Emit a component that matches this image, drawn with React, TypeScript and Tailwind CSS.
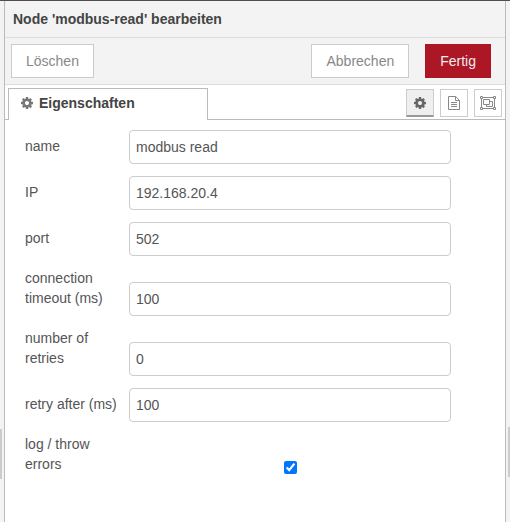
import React from "react";

const GEAR =
  "M1024 640q0 106-75 181t-181 75-181-75-75-181 75-181 181-75 181 75 75 181zm512-109v222q0 12-8 23t-20 13l-185 28q-19 54-39 91 35 50 107 138 10 12 10 25t-9 23q-27 37-99 108t-94 71q-12 0-26-9l-138-108q-44 23-91 38-16 136-29 186-7 28-36 28h-222q-14 0-24.5-8.5t-11.5-21.5l-28-184q-49-16-90-37l-141 107q-10 9-25 9-14 0-25-11-126-114-165-168-7-10-7-23 0-12 8-23 15-21 51-66.5t54-70.5q-27-50-41-99l-183-27q-13-2-21-12.5t-8-23.5v-222q0-12 8-23t19-13l186-28q14-46 39-92-40-57-107-138-10-12-10-24 0-10 9-23 26-36 98.5-107.5t94.5-71.5q13 0 26 10l138 107q44-23 91-38 16-136 29-186 7-28 36-28h222q14 0 24.5 8.5t11.5 21.5l28 184q49 16 90 37l142-107q9-9 24-9 13 0 25 10 129 119 165 170 7 8 7 22 0 12-8 23-15 21-51 66.5t-54 70.5q26 50 41 98l183 28q13 2 21 12.5t8 23.5z";

function GearIcon() {
  return (
    <svg className="size-3 shrink-0" viewBox="0 -128 1536 1536" fill="currentColor" fillRule="evenodd" aria-hidden="true">
      <path d={GEAR} />
    </svg>
  );
}

function FileIcon() {
  return (
    <svg className="h-3.5 w-3" viewBox="0 0 12 14" fill="none" stroke="currentColor" aria-hidden="true">
      <path d="M.5.5h7.2l3.8 3.8v9.2H.5zM7.5.5v4h4M3 6.5h6M3 8.5h6M3 10.5h6" />
    </svg>
  );
}

function GroupIcon() {
  return (
    <svg className="h-3.5 w-4" viewBox="0 0 16 14" fill="none" stroke="currentColor" aria-hidden="true">
      <path d="M2 1.5h12M2 12.5h12M1.5 2v10M14.5 2v10M3.5 3.5h6v5h-6zM9.5 5.5h3v5h-6v-2" />
      <path fill="white" d="M.5.5h2v2h-2zM13.5.5h2v2h-2zM.5 11.5h2v2h-2zM13.5 11.5h2v2h-2z" />
    </svg>
  );
}

const fields = [
  { id: "name", label: "name", value: "modbus read" },
  { id: "ip", label: "IP", value: "192.168.20.4" },
  { id: "port", label: "port", value: "502" },
  { id: "timeout", label: "connection timeout (ms)", value: "100" },
  { id: "retries", label: "number of retries", value: "0" },
  { id: "retry-after", label: "retry after (ms)", value: "100" },
];

const plainButton = "h-[34px] border border-[#ccc] bg-white px-3.5 text-[#888]";
const iconButton = "flex size-7 items-center justify-center border border-[#ccc]";

export default function App() {
  return (
    <div className="flex min-h-screen flex-col border-t border-[#504c50] bg-[#f3f3f3] font-['Liberation_Sans',Arial,sans-serif] text-sm leading-5 text-[#555]">
      <div className="flex grow">
        <div className="flex w-1 shrink-0 flex-col justify-end pb-[43px]">
          <div className="h-[50px] w-0.5 bg-[#ccc]" />
        </div>
        <main className="flex min-w-0 grow flex-col border-x border-[#bbb] bg-white">
          <h1 className="flex h-[37px] items-center border-b border-[#ddd] bg-[#f3f3f3] px-2 font-bold text-[#444]">
            Node 'modbus-read' bearbeiten
          </h1>
          <div className="flex h-[47px] items-center border-b border-[#ddd] bg-[#f3f3f3] pr-3.5 pl-1.5">
            <button type="button" className={plainButton}>Löschen</button>
            <button type="button" className={`${plainButton} mr-4 ml-auto`}>Abbrechen</button>
            <button type="button" className="h-[34px] border border-[#ad1625] bg-[#ad1625] px-3.5 text-[#eee]">
              Fertig
            </button>
          </div>
          <div className="flex h-[35px] items-end">
            <div className="w-[3px] border-b border-[#bbb]" />
            <button
              type="button"
              className="flex h-8 w-[200px] items-center gap-1.5 border border-b-0 border-[#bbb] px-3 pb-[3px] font-bold text-[#444]"
            >
              <span className="text-[#777]"><GearIcon /></span>
              Eigenschaften
            </button>
            <div className="flex h-full grow items-end justify-end gap-1.5 border-b border-[#bbb] pr-[3px] pb-0.5 text-[#888]">
              <button type="button" aria-label="Eigenschaften" className="flex size-7 items-center justify-center border border-b-2 border-[#ccc] border-b-[#999] bg-[#efefef] text-[#666]">
                <GearIcon />
              </button>
              <button type="button" aria-label="Beschreibung" className={iconButton}><FileIcon /></button>
              <button type="button" aria-label="Darstellung" className={iconButton}><GroupIcon /></button>
            </div>
          </div>
          <form className="flex flex-col gap-3 py-2.5 pr-[54px] pl-5">
            {fields.map((f) => (
              <div key={f.id} className="flex items-end gap-1">
                <label htmlFor={f.id} className="w-[100px] shrink-0 pb-2">{f.label}</label>
                <input
                  id={f.id}
                  type="text"
                  defaultValue={f.value}
                  className="h-[34px] min-w-0 grow rounded-[4px] border border-[#ccc] bg-white px-1.5"
                />
              </div>
            ))}
            <div className="flex items-end gap-1">
              <label htmlFor="log-errors" className="w-[100px] shrink-0 pr-4 pb-2">log / throw errors</label>
              <div className="flex grow justify-center pb-2">
                <input id="log-errors" type="checkbox" defaultChecked className="size-[13px]" />
              </div>
            </div>
          </form>
        </main>
        <div className="flex w-1 shrink-0 flex-col items-end justify-end pb-[45px]">
          <div className="h-[50px] w-0.5 bg-[#ccc]" />
        </div>
      </div>
    </div>
  );
}
